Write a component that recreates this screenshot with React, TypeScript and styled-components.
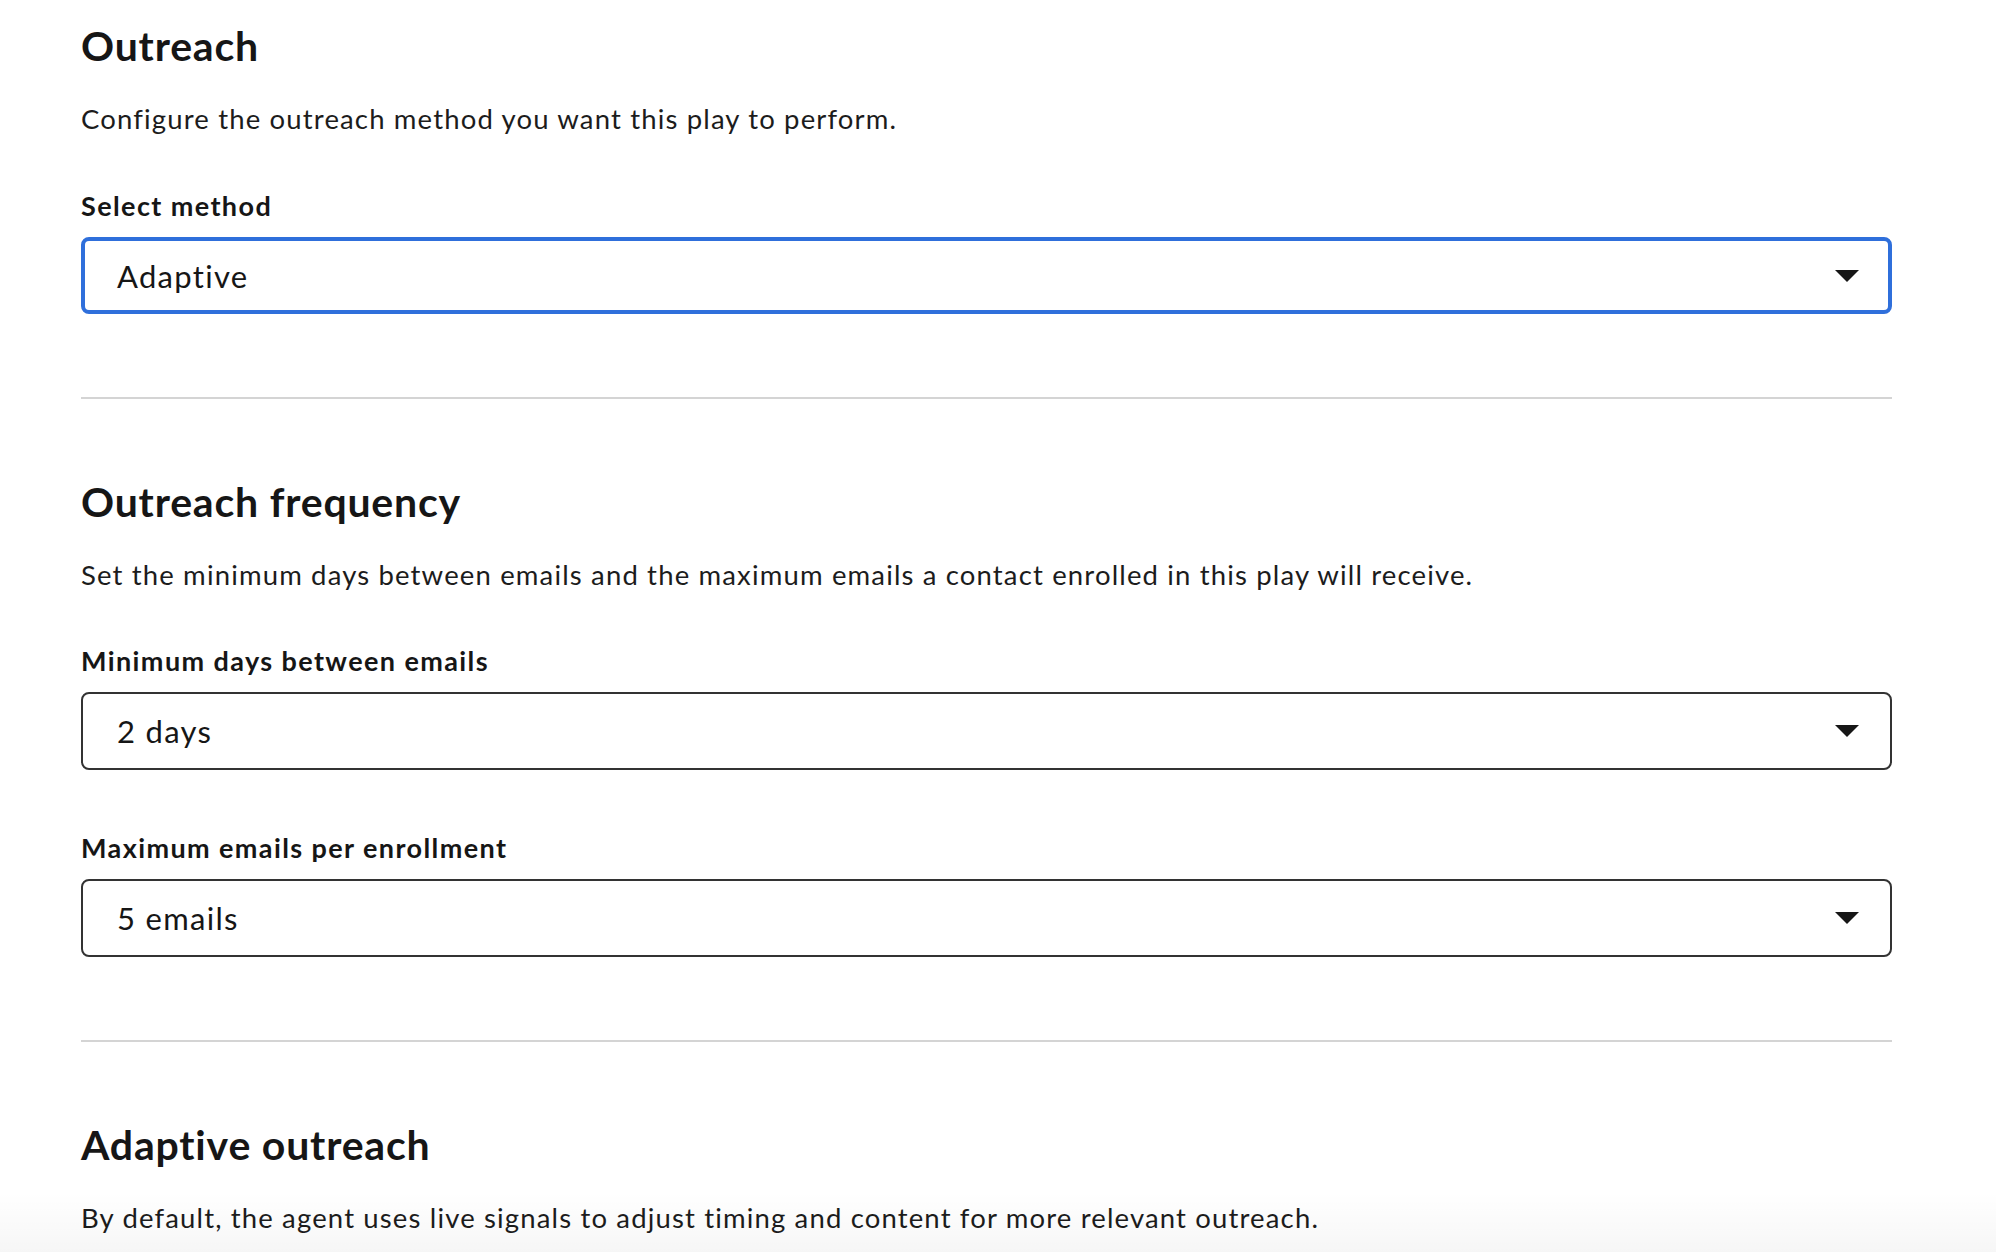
import React, { useState } from "react";
import styled, { createGlobalStyle } from "styled-components";

const GlobalStyle = createGlobalStyle`
  html, body {
    margin: 0;
    padding: 0;
    background: #ffffff;
  }
  body {
    font-family: Lato, "Open Sans", sans-serif;
    color: #1a1a1a;
  }
`;

const Page = styled.div`
  height: 1252px;
  overflow: hidden;
  position: relative;
  background: #ffffff;
`;

const Content = styled.div`
  display: flex;
  flex-direction: column;
  padding: 22px 104px 0 81px;
`;

const Section = styled.section`
  display: flex;
  flex-direction: column;
`;

const Heading = styled.h2`
  margin: 0;
  font-size: 41px;
  line-height: 48px;
  font-weight: 700;
  color: #161616;
  letter-spacing: 0.8px;
`;

const Description = styled.p`
  margin: 33px 0 0;
  font-size: 27.5px;
  line-height: 31px;
  font-weight: 400;
  letter-spacing: 1.15px;
  color: #1c1c1c;
`;

const Field = styled.div<{ $gap: number }>`
  display: flex;
  flex-direction: column;
  gap: 16px;
  margin-top: ${(p) => p.$gap}px;
`;

const Label = styled.label`
  font-size: 27px;
  line-height: 31px;
  font-weight: 700;
  letter-spacing: 1.4px;
  color: #161616;
`;

const SelectBox = styled.div<{ $focused?: boolean }>`
  display: flex;
  align-items: center;
  justify-content: space-between;
  box-sizing: border-box;
  height: ${(p) => (p.$focused ? 77 : 78)}px;
  padding: 0 ${(p) => (p.$focused ? 29 : 31)}px 0 ${(p) => (p.$focused ? 32 : 34)}px;
  border: ${(p) => (p.$focused ? "4px solid #2f6fdb" : "2px solid #333333")};
  border-radius: 8px;
  background: #ffffff;
  cursor: pointer;
`;

const Value = styled.span`
  font-size: 31px;
  line-height: 38px;
  letter-spacing: 1.3px;
  color: #161616;
`;

const Caret = styled.svg`
  width: 24px;
  height: 12px;
  flex-shrink: 0;
`;

const Divider = styled.hr`
  margin: 83px 0 79px;
  border: none;
  height: 2px;
  background: #d4d4d4;
`;

const BottomFade = styled.div`
  position: absolute;
  left: 0;
  right: 0;
  bottom: 0;
  height: 60px;
  background: linear-gradient(to bottom, rgba(0, 0, 0, 0), rgba(0, 0, 0, 0.035));
  pointer-events: none;
`;

const Select: React.FC<{ value: string; focused?: boolean }> = ({ value, focused }) => (
  <SelectBox $focused={focused}>
    <Value>{value}</Value>
    <Caret viewBox="0 0 24 12">
      <path d="M0 0 H24 L12 12 Z" fill="#161616" />
    </Caret>
  </SelectBox>
);

export default function App() {
  const [method] = useState("Adaptive");

  return (
    <Page>
      <GlobalStyle />
      <Content>
        <Section>
          <Heading>Outreach</Heading>
          <Description>Configure the outreach method you want this play to perform.</Description>
          <Field $gap={56}>
            <Label>Select method</Label>
            <Select value={method} focused />
          </Field>
        </Section>

        <Divider />

        <Section>
          <Heading>Outreach frequency</Heading>
          <Description>
            Set the minimum days between emails and the maximum emails a contact enrolled in this play will receive.
          </Description>
          <Field $gap={55}>
            <Label>Minimum days between emails</Label>
            <Select value="2 days" />
          </Field>
          <Field $gap={62}>
            <Label>Maximum emails per enrollment</Label>
            <Select value="5 emails" />
          </Field>
        </Section>

        <Divider />

        <Section>
          <Heading>Adaptive outreach</Heading>
          <Description>
            By default, the agent uses live signals to adjust timing and content for more relevant outreach.
          </Description>
        </Section>
      </Content>
      <BottomFade />
    </Page>
  );
}
